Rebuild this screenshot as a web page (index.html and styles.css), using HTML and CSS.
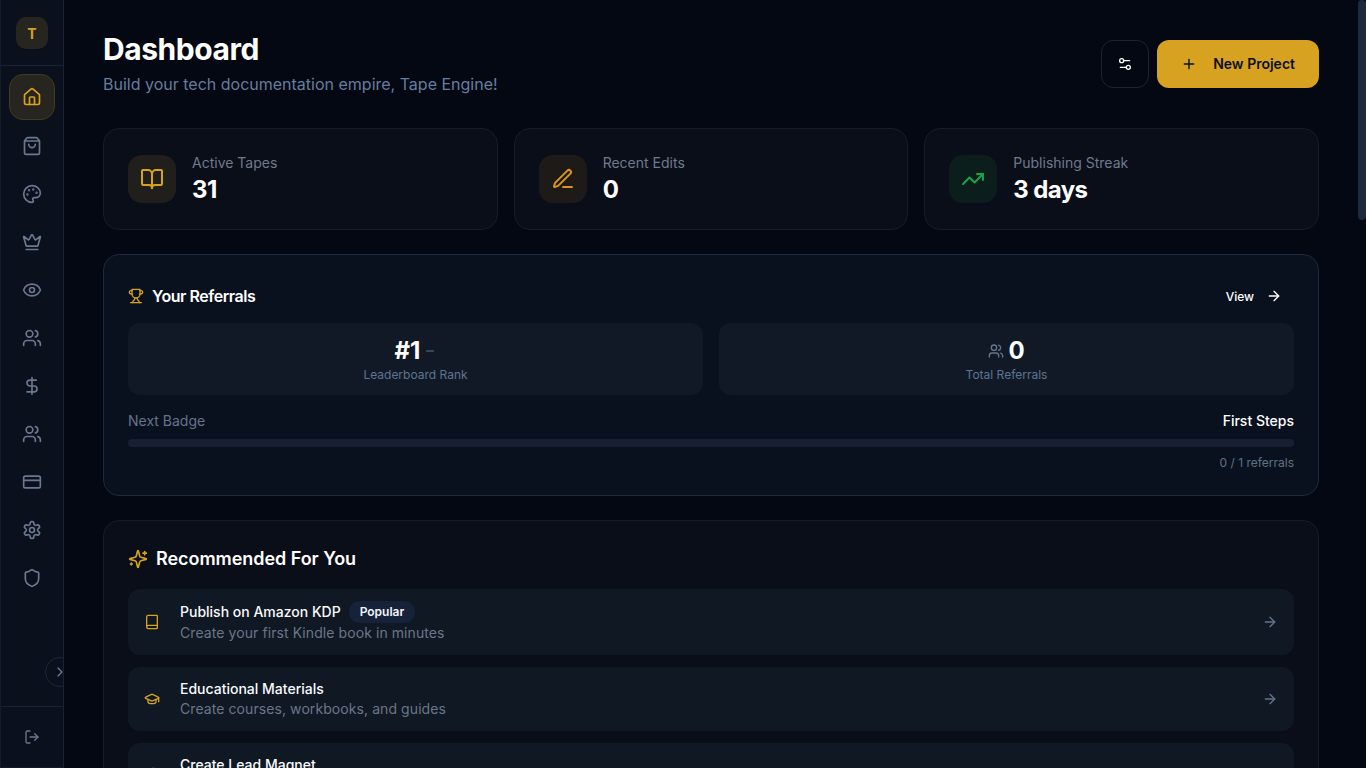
FILE: index.html
```html
<!DOCTYPE html>
<html lang="en">
<head>
<meta charset="utf-8">
<title>Dashboard</title>
<link rel="stylesheet" href="styles.css">
</head>
<body>
<div class="app">
  <aside class="sidebar">
    <div class="brand"><div class="brand-tile">T</div></div>
    <nav class="nav">
      <a class="nav-item active"><svg class="i20" viewBox="0 0 24 24"><path d="M15 21v-8a1 1 0 0 0-1-1h-4a1 1 0 0 0-1 1v8"/><path d="M3 10a2 2 0 0 1 .709-1.528l7-5.999a2 2 0 0 1 2.582 0l7 5.999A2 2 0 0 1 21 10v9a2 2 0 0 1-2 2H5a2 2 0 0 1-2-2z"/></svg></a>
      <a class="nav-item"><svg class="i20" viewBox="0 0 24 24"><path d="M16 10a4 4 0 0 1-8 0"/><path d="M3.103 6.034h17.794"/><path d="M3.4 5.467a2 2 0 0 0-.4 1.2V20a2 2 0 0 0 2 2h14a2 2 0 0 0 2-2V6.667a2 2 0 0 0-.4-1.2l-2.1-2.8A2 2 0 0 0 17 2H7a2 2 0 0 0-1.6.8z"/></svg></a>
      <a class="nav-item"><svg class="i20" viewBox="0 0 24 24"><circle cx="13.5" cy="6.5" r=".5" class="dot"/><circle cx="17.5" cy="10.5" r=".5" class="dot"/><circle cx="8.5" cy="7.5" r=".5" class="dot"/><circle cx="6.5" cy="12.5" r=".5" class="dot"/><path d="M12 2C6.5 2 2 6.5 2 12s4.5 10 10 10c.926 0 1.648-.746 1.648-1.688 0-.437-.18-.835-.437-1.125-.29-.289-.438-.652-.438-1.125a1.64 1.64 0 0 1 1.668-1.668h1.996c3.051 0 5.555-2.503 5.555-5.554C21.965 6.012 17.461 2 12 2z"/></svg></a>
      <a class="nav-item"><svg class="i20" viewBox="0 0 24 24"><path d="M11.562 3.266a.5.5 0 0 1 .876 0L15.39 8.87a1 1 0 0 0 1.516.294L21.183 5.5a.5.5 0 0 1 .798.519l-2.834 10.246a1 1 0 0 1-.956.734H5.81a1 1 0 0 1-.957-.734L2.02 6.02a.5.5 0 0 1 .798-.519l4.276 3.664a1 1 0 0 0 1.516-.294z"/><path d="M5 21h14"/></svg></a>
      <a class="nav-item"><svg class="i20" viewBox="0 0 24 24"><path d="M2.062 12.348a1 1 0 0 1 0-.696 10.75 10.75 0 0 1 19.876 0 1 1 0 0 1 0 .696 10.75 10.75 0 0 1-19.876 0"/><circle cx="12" cy="12" r="3"/></svg></a>
      <a class="nav-item"><svg class="i20" viewBox="0 0 24 24"><path d="M16 21v-2a4 4 0 0 0-4-4H6a4 4 0 0 0-4 4v2"/><circle cx="9" cy="7" r="4"/><path d="M22 21v-2a4 4 0 0 0-3-3.87"/><path d="M16 3.13a4 4 0 0 1 0 7.75"/></svg></a>
      <a class="nav-item"><svg class="i20" viewBox="0 0 24 24"><path d="M12 2v20"/><path d="M17 5H9.5a3.5 3.5 0 0 0 0 7h5a3.5 3.5 0 0 1 0 7H6"/></svg></a>
      <a class="nav-item"><svg class="i20" viewBox="0 0 24 24"><path d="M16 21v-2a4 4 0 0 0-4-4H6a4 4 0 0 0-4 4v2"/><circle cx="9" cy="7" r="4"/><path d="M22 21v-2a4 4 0 0 0-3-3.87"/><path d="M16 3.13a4 4 0 0 1 0 7.75"/></svg></a>
      <a class="nav-item"><svg class="i20" viewBox="0 0 24 24"><rect width="20" height="14" x="2" y="5" rx="2"/><path d="M2 10h20"/></svg></a>
      <a class="nav-item"><svg class="i20" viewBox="0 0 24 24"><path d="M12.22 2h-.44a2 2 0 0 0-2 2v.18a2 2 0 0 1-1 1.73l-.43.25a2 2 0 0 1-2 0l-.15-.08a2 2 0 0 0-2.73.73l-.22.38a2 2 0 0 0 .73 2.73l.15.1a2 2 0 0 1 1 1.72v.51a2 2 0 0 1-1 1.74l-.15.09a2 2 0 0 0-.73 2.73l.22.38a2 2 0 0 0 2.73.73l.15-.08a2 2 0 0 1 2 0l.43.25a2 2 0 0 1 1 1.73V20a2 2 0 0 0 2 2h.44a2 2 0 0 0 2-2v-.18a2 2 0 0 1 1-1.73l.43-.25a2 2 0 0 1 2 0l.15.08a2 2 0 0 0 2.73-.73l.22-.39a2 2 0 0 0-.73-2.73l-.15-.08a2 2 0 0 1-1-1.74v-.5a2 2 0 0 1 1-1.74l.15-.09a2 2 0 0 0 .73-2.73l-.22-.38a2 2 0 0 0-2.73-.73l-.15.08a2 2 0 0 1-2 0l-.43-.25a2 2 0 0 1-1-1.73V4a2 2 0 0 0-2-2z"/><circle cx="12" cy="12" r="3"/></svg></a>
      <a class="nav-item"><svg class="i20" viewBox="0 0 24 24"><path d="M20 13c0 5-3.5 7.5-7.66 8.95a1 1 0 0 1-.67-.01C7.5 20.5 4 18 4 13V6a1 1 0 0 1 1-1c2 0 4.5-1.2 6.24-2.72a1.17 1.17 0 0 1 1.52 0C14.51 3.81 17 5 19 5a1 1 0 0 1 1 1z"/></svg></a>
    </nav>
    <button class="collapse"><svg class="i16" viewBox="0 0 24 24"><path d="m9 18 6-6-6-6"/></svg></button>
    <div class="sidebar-foot"><svg class="i16" viewBox="0 0 24 24"><path d="m16 17 5-5-5-5"/><path d="M21 12H9"/><path d="M9 21H5a2 2 0 0 1-2-2V5a2 2 0 0 1 2-2h4"/></svg></div>
  </aside>

  <main class="main">
    <div class="content">
      <header class="page-head">
        <div>
          <h1 class="page-title">Dashboard</h1>
          <p class="page-sub">Build your tech documentation empire, Tape Engine!</p>
        </div>
        <div class="head-actions">
          <button class="btn-square"><svg class="i16" viewBox="0 0 24 24"><path d="M14 17H5"/><path d="M19 7h-9"/><circle cx="17" cy="17" r="3"/><circle cx="7" cy="7" r="3"/></svg></button>
          <button class="btn-primary"><svg class="i16" viewBox="0 0 24 24"><path d="M5 12h14"/><path d="M12 5v14"/></svg><span class="btn-label">New Project</span></button>
        </div>
      </header>

      <section class="stats">
        <div class="stat">
          <div class="stat-icon tint-gold"><svg class="i24" viewBox="0 0 24 24"><path d="M12 7v14"/><path d="M3 18a1 1 0 0 1-1-1V4a1 1 0 0 1 1-1h5a4 4 0 0 1 4 4 4 4 0 0 1 4-4h5a1 1 0 0 1 1 1v13a1 1 0 0 1-1 1h-6a3 3 0 0 0-3 3 3 3 0 0 0-3-3z"/></svg></div>
          <div><div class="stat-label">Active Tapes</div><div class="stat-value">31</div></div>
        </div>
        <div class="stat">
          <div class="stat-icon tint-orange"><svg class="i24" viewBox="0 0 24 24"><path d="M12 20h9"/><path d="M16.376 3.622a1 1 0 0 1 3.002 3.002L7.368 18.635a2 2 0 0 1-.855.506l-2.872.838a.5.5 0 0 1-.62-.62l.838-2.872a2 2 0 0 1 .506-.854z"/></svg></div>
          <div><div class="stat-label">Recent Edits</div><div class="stat-value">0</div></div>
        </div>
        <div class="stat">
          <div class="stat-icon tint-green"><svg class="i24" viewBox="0 0 24 24"><path d="M16 7h6v6"/><path d="m22 7-8.5 8.5-5-5L2 17"/></svg></div>
          <div><div class="stat-label">Publishing Streak</div><div class="stat-value">3 days</div></div>
        </div>
      </section>

      <section class="referrals">
        <div class="ref-head">
          <h2 class="ref-title"><svg class="i16 gold" viewBox="0 0 24 24"><path d="M6 9H4.5a2.5 2.5 0 0 1 0-5H6"/><path d="M18 9h1.5a2.5 2.5 0 0 0 0-5H18"/><path d="M4 22h16"/><path d="M10 14.66V17c0 .55-.47.98-.97 1.21C7.85 18.75 7 20.24 7 22"/><path d="M14 14.66V17c0 .55.47.98.97 1.21C16.15 18.75 17 20.24 17 22"/><path d="M18 2H6v7a6 6 0 0 0 12 0V2Z"/></svg>Your Referrals</h2>
          <button class="view-btn">View<svg class="i16" viewBox="0 0 24 24"><path d="M5 12h14"/><path d="m12 5 7 7-7 7"/></svg></button>
        </div>
        <div class="ref-tiles">
          <div class="ref-tile">
            <div class="ref-value">#1<svg class="i12 muted" viewBox="0 0 24 24"><path d="M5 12h14"/></svg></div>
            <div class="ref-label">Leaderboard Rank</div>
          </div>
          <div class="ref-tile">
            <div class="ref-value"><svg class="i16 muted" viewBox="0 0 24 24"><path d="M16 21v-2a4 4 0 0 0-4-4H6a4 4 0 0 0-4 4v2"/><circle cx="9" cy="7" r="4"/><path d="M22 21v-2a4 4 0 0 0-3-3.87"/><path d="M16 3.13a4 4 0 0 1 0 7.75"/></svg>0</div>
            <div class="ref-label">Total Referrals</div>
          </div>
        </div>
        <div class="badge-row"><span class="badge-label">Next Badge</span><span class="badge-name">First Steps</span></div>
        <div class="progress"></div>
        <div class="progress-note">0 / 1 referrals</div>
      </section>

      <section class="recommended">
        <h2 class="rec-title"><svg class="i20 gold" viewBox="0 0 24 24"><path d="M9.937 15.5A2 2 0 0 0 8.5 14.063l-6.135-1.582a.5.5 0 0 1 0-.962L8.5 9.936A2 2 0 0 0 9.937 8.5l1.582-6.135a.5.5 0 0 1 .963 0L14.063 8.5A2 2 0 0 0 15.5 9.937l6.135 1.581a.5.5 0 0 1 0 .964L15.5 14.063a2 2 0 0 0-1.437 1.437l-1.582 6.135a.5.5 0 0 1-.963 0z"/><path d="M20 3v4"/><path d="M22 5h-4"/><path d="M4 17v2"/><path d="M5 18H3"/></svg>Recommended For You</h2>
        <div class="rec-list">
          <a class="rec-row">
            <svg class="i16 gold" viewBox="0 0 24 24"><path d="M4 19.5v-15A2.5 2.5 0 0 1 6.5 2H19a1 1 0 0 1 1 1v18a1 1 0 0 1-1 1H6.5a1 1 0 0 1 0-5H20"/></svg>
            <div class="rec-text">
              <div class="rec-name">Publish on Amazon KDP<span class="pill">Popular</span></div>
              <div class="rec-desc">Create your first Kindle book in minutes</div>
            </div>
            <svg class="i16 muted" viewBox="0 0 24 24"><path d="M5 12h14"/><path d="m12 5 7 7-7 7"/></svg>
          </a>
          <a class="rec-row">
            <svg class="i16 gold" viewBox="0 0 24 24"><path d="M21.42 10.922a1 1 0 0 0-.019-1.838L12.83 5.18a2 2 0 0 0-1.66 0L2.6 9.08a1 1 0 0 0 0 1.832l8.57 3.908a2 2 0 0 0 1.66 0z"/><path d="M22 10v6"/><path d="M6 12.5V16a6 3 0 0 0 12 0v-3.5"/></svg>
            <div class="rec-text">
              <div class="rec-name">Educational Materials</div>
              <div class="rec-desc">Create courses, workbooks, and guides</div>
            </div>
            <svg class="i16 muted" viewBox="0 0 24 24"><path d="M5 12h14"/><path d="m12 5 7 7-7 7"/></svg>
          </a>
          <a class="rec-row">
            <svg class="i16 gold" viewBox="0 0 24 24"><path d="m6 15-4-4 6.75-6.77a7.79 7.79 0 0 1 11 11L13 22l-4-4 6.39-6.36a2.14 2.14 0 0 0-3-3L6 15"/><path d="m5 8 4 4"/><path d="m12 15 4 4"/></svg>
            <div class="rec-text">
              <div class="rec-name">Create Lead Magnet</div>
            </div>
            <svg class="i16 muted" viewBox="0 0 24 24"><path d="M5 12h14"/><path d="m12 5 7 7-7 7"/></svg>
          </a>
        </div>
      </section>
    </div>
  </main>
  <div class="scrollbar"><div class="scrollbar-thumb"></div></div>
</div>
</body>
</html>
```

FILE: styles.css
```css
* { box-sizing: border-box; }
html, body { margin: 0; height: 100%; }
body { background: #040812; color: #fff; font-family: Inter, "Liberation Sans", sans-serif; overflow: hidden; }
svg { fill: none; stroke: currentColor; stroke-width: 2; stroke-linecap: round; stroke-linejoin: round; flex: none; display: block; }
.i12 { width: 12px; height: 12px; }
.i16 { width: 16px; height: 16px; }
.i20 { width: 20px; height: 20px; }
.i24 { width: 24px; height: 24px; }
.dot { fill: currentColor; }
.gold { color: #d6a21f; }
.muted { color: #64748b; }
h1, h2, p { margin: 0; }
button { font-family: inherit; cursor: pointer; }

.app { display: flex; height: 768px; overflow: hidden; }

.sidebar { position: relative; width: 64px; flex: none; display: flex; flex-direction: column; background: #0a101c; border-left: 1px solid #141c2c; border-right: 1px solid #1a2233; border-bottom: 1px solid #141c2c; overflow: hidden; }
.brand { height: 66px; flex: none; display: flex; align-items: center; justify-content: center; border-bottom: 1px solid #1a2233; padding-top: 1px; }
.brand-tile { width: 32px; height: 32px; border-radius: 10px; background: #26251f; color: #d6a21f; font-size: 14px; font-weight: 700; display: flex; align-items: center; justify-content: center; }
.nav { flex: 1; display: flex; flex-direction: column; align-items: center; gap: 2px; padding-top: 8px; }
.nav-item { width: 46px; height: 46px; border-radius: 14px; border: 1px solid transparent; color: #6b788e; display: flex; align-items: center; justify-content: center; }
.nav-item.active { background: #26251f; border-color: #433b20; color: #d6a21f; margin-bottom: 1px; }
.collapse { position: absolute; left: 44px; top: 657px; width: 30px; height: 30px; padding: 0; border-radius: 50%; background: #0a101c; border: 1px solid #1e293b; color: #6b788e; display: flex; align-items: center; justify-content: center; }
.sidebar-foot { height: 61px; flex: none; border-top: 1px solid #1a2233; color: #6b788e; display: flex; align-items: center; justify-content: center; }

.main { flex: 1; min-width: 0; height: 768px; overflow: hidden; }
.scrollbar { width: 8px; flex: none; background: #040812; }
.scrollbar-thumb { height: 220px; background: #1e293b; border-radius: 4px; }
.content { padding: 32px 39px; }

.page-head { display: flex; justify-content: space-between; align-items: center; margin-bottom: 32px; }
.page-title { font-size: 30px; line-height: 34px; font-weight: 700; letter-spacing: -0.45px; }
.page-sub { margin-top: 6px; font-size: 16px; line-height: 24px; color: #667d9f; }
.head-actions { display: flex; gap: 8px; }
.btn-square { width: 48px; height: 48px; border-radius: 12px; border: 1px solid #1c2335; background: transparent; color: #fff; display: flex; align-items: center; justify-content: center; padding: 0; }
.btn-primary { height: 48px; padding: 0 24px; border: 0; border-radius: 12px; background: #d6a21f; color: #0b0f19; font-size: 14px; font-weight: 600; display: flex; align-items: center; gap: 16px; }
.btn-label { margin-bottom: 2px; }

.stats { display: grid; grid-template-columns: repeat(3, 1fr); gap: 16px; margin-bottom: 24px; }
.stat { display: flex; align-items: center; gap: 16px; padding: 24px; background: #0a0e19; border: 1px solid #161c2b; border-radius: 16px; }
.stat-icon { width: 48px; height: 48px; border-radius: 14px; display: flex; align-items: center; justify-content: center; }
.tint-gold { background: #201f1b; color: #d6a21f; }
.tint-orange { background: #1e1a17; color: #d9951e; }
.tint-green { background: #0b1e1c; color: #16a34a; }
.stat-label { font-size: 14px; line-height: 20px; color: #6f7a8c; }
.stat-value { font-size: 24px; line-height: 34px; margin-bottom: -2px; font-weight: 700; letter-spacing: -0.6px; }

.referrals { padding: 24px; background: #0a111e; border: 1px solid #1e293b; border-radius: 16px; margin-bottom: 24px; }
.ref-head { display: flex; justify-content: space-between; align-items: center; height: 34px; margin-bottom: 10px; }
.ref-title { display: flex; align-items: center; gap: 8px; font-size: 16px; line-height: 24px; font-weight: 600; letter-spacing: -0.45px; }
.view-btn { height: 36px; padding: 0 12px; display: flex; align-items: center; gap: 12px; background: transparent; border: 0; color: #fff; font-size: 12px; font-weight: 500; }
.ref-tiles { display: grid; grid-template-columns: 1fr 1fr; gap: 16px; }
.ref-tile { height: 72px; padding: 12px; background: #111927; border-radius: 12px; text-align: center; }
.ref-value { display: flex; align-items: center; justify-content: center; gap: 4px; font-size: 24px; line-height: 32px; font-weight: 700; }
.ref-label { font-size: 12px; line-height: 16px; color: #5d7492; }
.badge-row { display: flex; justify-content: space-between; margin-top: 16px; font-size: 14px; line-height: 20px; }
.badge-label { color: #64748b; }
.badge-name { font-weight: 500; }
.progress { height: 8px; margin-top: 8px; border-radius: 4px; background: #172033; }
.progress-note { margin-top: 8px; font-size: 12px; line-height: 16px; color: #5d7188; text-align: right; }

.recommended { padding: 24px; background: #0a0e19; border: 1px solid #161c2b; border-radius: 16px; }
.rec-title { display: flex; align-items: center; gap: 8px; font-size: 18px; line-height: 28px; font-weight: 600; letter-spacing: -0.05px; margin-bottom: 16px; }
.rec-list { display: flex; flex-direction: column; gap: 12px; }
.rec-row { display: flex; align-items: center; gap: 20px; padding: 12px 16px; background: #101824; border-radius: 12px; min-height: 64px; }
.rec-text { flex: 1; min-width: 0; align-self: flex-start; }
.rec-name { display: flex; align-items: center; gap: 8px; font-size: 14px; line-height: 20px; font-weight: 500; color: #f8fafc; }
.rec-desc { font-size: 14px; line-height: 20px; letter-spacing: 0.08px; color: #6b7688; }
.pill { display: inline-flex; align-items: center; height: 22px; padding: 0 11px; border-radius: 999px; background: #16213a; color: #f1f5f9; font-size: 12px; font-weight: 600; }
```
